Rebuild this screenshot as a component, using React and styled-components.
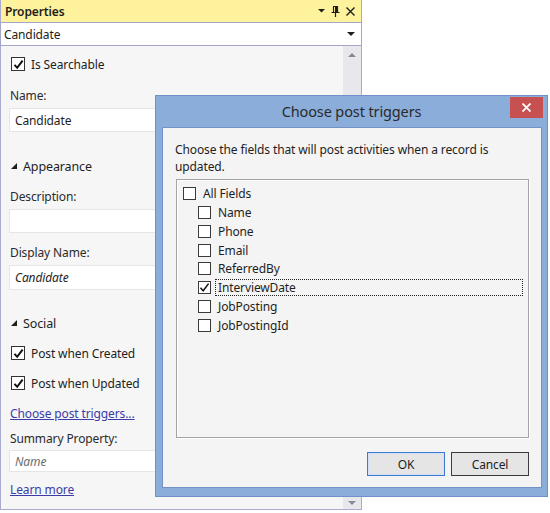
import React from "react";
import styled, { createGlobalStyle } from "styled-components";

const GlobalStyle = createGlobalStyle`
  html, body { margin: 0; padding: 0; background: #fff; }
  body {
    font-family: "Noto Sans", "Open Sans", sans-serif;
    font-size: 12px;
    letter-spacing: -0.12px;
    color: #1e1e1e;
  }
  * { box-sizing: border-box; }
`;

const Desktop = styled.div`
  position: relative;
  width: 550px;
  height: 513px;
  overflow: hidden;
`;

/* ---------- Properties tool window ---------- */

const Panel = styled.div`
  width: 362px;
  height: 510px;
  display: flex;
  flex-direction: column;
  border: 1px solid #a9abd0;
  border-top: none;
  background: #f6f6f6;
`;

const ToolTitle = styled.div`
  height: 22px;
  display: flex;
  align-items: center;
  padding: 0 6px 0 4px;
  background: #fff29d;
  font-weight: 600;
  color: #1e1e1e;
`;

const ToolName = styled.span`
  flex: 1;
`;

const ToolIcons = styled.div`
  display: flex;
  align-items: center;
  gap: 6px;
`;

const Combo = styled.div`
  height: 24px;
  display: flex;
  align-items: center;
  padding: 0 6px 0 3px;
  background: #fff;
  border: 1px solid #a3a6ca;
  margin: 0 -1px;
`;

const ComboText = styled.span`
  flex: 1;
`;

const Body = styled.div`
  flex: 1;
  display: flex;
  min-height: 0;
`;

const Content = styled.div`
  flex: 1;
  display: flex;
  flex-direction: column;
  padding: 0 6px 0 8px;
`;

const ScrollBar = styled.div`
  width: 18px;
  background: #e8e8ec;
  display: flex;
  flex-direction: column;
  justify-content: space-between;
  align-items: center;
  padding: 7px 0 4px;
`;

const CheckRow = styled.div`
  height: 20px;
  display: flex;
  align-items: center;
  gap: 6px;
  padding-left: 2px;
  margin-top: ${(p) => p.$mt}px;
`;

const Label = styled.div`
  height: 16px;
  line-height: 16px;
  padding-left: 1px;
  color: #2b2b2b;
  margin-top: ${(p) => p.$mt}px;
`;

const TextBox = styled.div`
  height: ${(p) => p.$h || 24}px;
  margin-top: ${(p) => p.$mt}px;
  background: #fff;
  border: 1px solid #e6e6e6;
  display: flex;
  align-items: center;
  padding-left: 5px;
  font-style: ${(p) => (p.$italic ? "italic" : "normal")};
  color: ${(p) => (p.$muted ? "#6d6d6d" : "#1e1e1e")};
`;

const Category = styled.div`
  height: 18px;
  display: flex;
  align-items: center;
  gap: 6px;
  padding-left: 2px;
  margin-top: ${(p) => p.$mt}px;
  font-size: 12.5px;
`;

const Link = styled.a`
  display: block;
  height: 16px;
  line-height: 16px;
  padding-left: 1px;
  color: #3c3ca8;
  text-decoration: underline;
  margin-top: ${(p) => p.$mt}px;
`;

const PropBox = styled.span`
  width: 14px;
  height: 14px;
  border: 1px solid #333;
  background: #fff;
  display: flex;
  align-items: center;
  justify-content: center;
`;

/* ---------- Dialog ---------- */

const Dialog = styled.div`
  position: absolute;
  left: 155px;
  top: 95px;
  width: 393px;
  height: 402px;
  display: flex;
  flex-direction: column;
  background: #8badda;
  border: 1px solid #6f91c9;
`;

const DialogTitle = styled.div`
  height: 31px;
  display: flex;
  align-items: center;
  justify-content: center;
  font-size: 14.5px;
  color: #2a2a2a;
  padding-bottom: 2px;
`;

const CloseButton = styled.div`
  position: absolute;
  top: 1px;
  right: 4px;
  width: 33px;
  height: 21px;
  background: #c75050;
  display: flex;
  align-items: center;
  justify-content: center;
`;

const Client = styled.div`
  flex: 1;
  margin: 0 5px 8px 6px;
  background: #f5f4f4;
  border: 1px solid #7393c8;
  display: flex;
  flex-direction: column;
`;

const Intro = styled.p`
  margin: 13px 0 0 12px;
  line-height: 17px;
  color: #1e1e1e;
`;

const ListBox = styled.div`
  width: 353px;
  height: 259px;
  margin: 4px 0 0 13px;
  border: 1px solid #a4a4a4;
  box-shadow: inset 1px 1px 0 #fff, 1px 1px 0 #fff;
  padding-top: 4px;
`;

const ListRow = styled.div`
  height: 18.86px;
  display: flex;
  align-items: center;
  padding-left: ${(p) => p.$indent}px;
  padding-right: 5px;
`;

const ListBoxCheck = styled.span`
  width: 13px;
  height: 13px;
  flex: none;
  border: 1px solid #3a3a3a;
  background: #fff;
  margin-right: 4px;
  display: flex;
  align-items: center;
  justify-content: center;
`;

const ItemLabel = styled.span`
  flex: 1;
  height: 17px;
  line-height: 15px;
  padding: 0 2px;
  border: 1px dotted ${(p) => (p.$focus ? "#222" : "transparent")};
`;

const ButtonRow = styled.div`
  display: flex;
  justify-content: flex-end;
  gap: 6px;
  margin-top: 14px;
  padding-right: 12px;
`;

const Button = styled.div`
  width: 78px;
  height: 24px;
  display: flex;
  align-items: center;
  justify-content: center;
  background: #e5e5e5;
  border: 1px solid ${(p) => (p.$default ? "#3d7bd0" : "#3c3c3c")};
  box-shadow: ${(p) => (p.$default ? "inset 0 0 0 1px #cfe0f7" : "none")};
  color: #1e1e1e;
`;

/* ---------- icons ---------- */

const Check = ({ heavy }) => (
  <svg width="11" height="11" viewBox="0 0 11 11">
    <path
      d="M1.5 5.8 L4.2 8.8 L9.6 1.6"
      fill="none"
      stroke="#111"
      strokeWidth={heavy ? 2 : 1.5}
    />
  </svg>
);

const Expander = () => (
  <svg width="6" height="6" viewBox="0 0 6 6">
    <path d="M6 0 L6 6 L0 6 Z" fill="#1e1e1e" />
  </svg>
);

const DownArrow = ({ color = "#1e1e1e", w = 8 }) => (
  <svg width={w} height={w / 2} viewBox="0 0 8 4">
    <path d="M0 0 L8 0 L4 4 Z" fill={color} />
  </svg>
);

const UpArrow = () => (
  <svg width="8" height="4" viewBox="0 0 8 4">
    <path d="M0 4 L8 4 L4 0 Z" fill="#86899a" />
  </svg>
);

const Pin = () => (
  <svg width="9" height="11" viewBox="0 0 9 11">
    <path
      d="M2 0.5 H7 M2.5 0.5 V6 M6.5 0.5 V6 M0.5 6.5 H8.5 M4.5 6.5 V11"
      fill="none"
      stroke="#1e1e1e"
      strokeWidth="1.2"
    />
    <path d="M4 1 H6 V6 H4 Z" fill="#1e1e1e" />
  </svg>
);

const Cross = ({ color = "#1e1e1e", size = 9, width = 1.4 }) => (
  <svg width={size} height={size} viewBox="0 0 9 9">
    <path d="M0.5 0.5 L8.5 8.5 M8.5 0.5 L0.5 8.5" stroke={color} strokeWidth={width} />
  </svg>
);

const fields = [
  "Name",
  "Phone",
  "Email",
  "ReferredBy",
  "InterviewDate",
  "JobPosting",
  "JobPostingId",
];

export default function App() {
  return (
    <>
      <GlobalStyle />
      <Desktop>
        <Panel>
          <ToolTitle>
            <ToolName>Properties</ToolName>
            <ToolIcons>
              <DownArrow w={7} />
              <Pin />
              <Cross />
            </ToolIcons>
          </ToolTitle>
          <Combo>
            <ComboText>Candidate</ComboText>
            <DownArrow />
          </Combo>
          <Body>
            <Content>
              <CheckRow $mt={8}>
                <PropBox>
                  <Check heavy />
                </PropBox>
                Is Searchable
              </CheckRow>
              <Label $mt={14}>Name:</Label>
              <TextBox $mt={4}>Candidate</TextBox>
              <Category $mt={25}>
                <Expander />
                Appearance
              </Category>
              <Label $mt={14}>Description:</Label>
              <TextBox $mt={4} />
              <Label $mt={12}>Display Name:</Label>
              <TextBox $mt={4} $h={25} $italic>
                Candidate
              </TextBox>
              <Category $mt={24}>
                <Expander />
                Social
              </Category>
              <CheckRow $mt={11}>
                <PropBox>
                  <Check heavy />
                </PropBox>
                Post when Created
              </CheckRow>
              <CheckRow $mt={10}>
                <PropBox>
                  <Check heavy />
                </PropBox>
                Post when Updated
              </CheckRow>
              <Link $mt={13}>Choose post triggers...</Link>
              <Label $mt={9}>Summary Property:</Label>
              <TextBox $mt={3} $h={22} $italic $muted>
                Name
              </TextBox>
              <Link $mt={10}>Learn more</Link>
            </Content>
            <ScrollBar>
              <UpArrow />
              <DownArrow color="#86899a" />
            </ScrollBar>
          </Body>
        </Panel>

        <Dialog>
          <DialogTitle>Choose post triggers</DialogTitle>
          <CloseButton>
            <Cross color="#fff" size={9} width={1.8} />
          </CloseButton>
          <Client>
            <Intro>
              Choose the fields that will post activities when a record is
              <br />
              updated.
            </Intro>
            <ListBox>
              <ListRow $indent={6}>
                <ListBoxCheck />
                <ItemLabel>All Fields</ItemLabel>
              </ListRow>
              {fields.map((f) => (
                <ListRow key={f} $indent={21}>
                  <ListBoxCheck>{f === "InterviewDate" && <Check />}</ListBoxCheck>
                  <ItemLabel $focus={f === "InterviewDate"}>{f}</ItemLabel>
                </ListRow>
              ))}
            </ListBox>
            <ButtonRow>
              <Button $default>OK</Button>
              <Button>Cancel</Button>
            </ButtonRow>
          </Client>
        </Dialog>
      </Desktop>
    </>
  );
}
